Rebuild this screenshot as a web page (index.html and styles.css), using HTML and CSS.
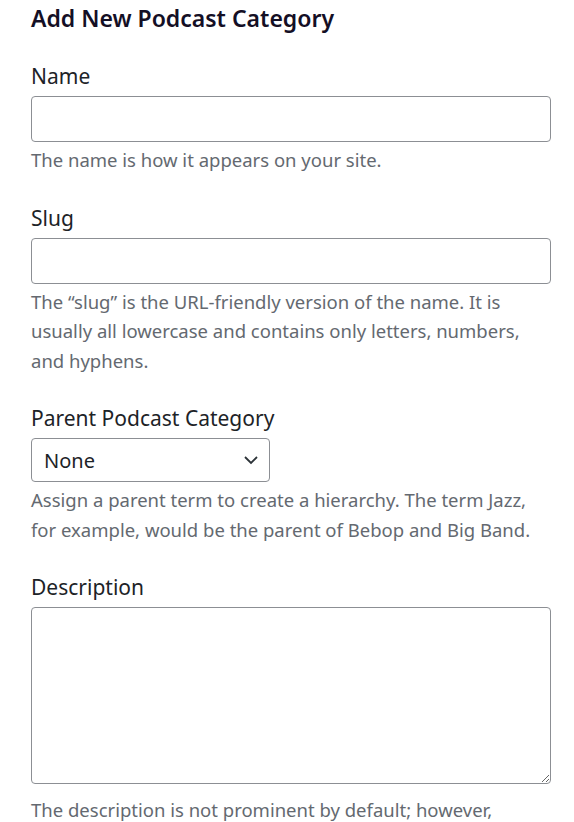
FILE: index.html
```html
<!DOCTYPE html>
<html lang="en">
<head>
<meta charset="utf-8">
<title>Add New Podcast Category</title>
<link rel="stylesheet" href="styles.css">
</head>
<body>
<div class="form-wrap">
  <h2 class="title">Add New Podcast Category</h2>
  <div class="field">
    <label class="label" for="tag-name">Name</label>
    <input class="text-input" id="tag-name" type="text">
    <p class="help">The name is how it appears on your site.</p>
  </div>
  <div class="field">
    <label class="label" for="tag-slug">Slug</label>
    <input class="text-input" id="tag-slug" type="text">
    <p class="help">The “slug” is the URL-friendly version of the name. It is usually all lowercase and contains only letters, numbers, and hyphens.</p>
  </div>
  <div class="field">
    <label class="label" for="parent">Parent Podcast Category</label>
    <div class="select">
      <span class="select-value">None</span>
      <svg class="chevron" width="16" height="16" viewBox="0 0 16 16"><path d="M2 5 L8 11 L14 5" fill="none" stroke="#2c3338" stroke-width="1.8"/></svg>
    </div>
    <p class="help">Assign a parent term to create a hierarchy. The term Jazz, for example, would be the parent of Bebop and Big Band.</p>
  </div>
  <div class="field">
    <label class="label" for="desc">Description</label>
    <textarea class="textarea" id="desc"></textarea>
    <p class="help help-wide">The description is not prominent by default; however, some themes may show it.</p>
  </div>
</div>
</body>
</html>
```
FILE: styles.css
```css
html, body {
  margin: 0;
  padding: 0;
  background: #fff;
}
body {
  font-family: "Noto Sans", "Open Sans", sans-serif;
  color: #1d2327;
  overflow: hidden;
}
.form-wrap {
  margin-left: 31px;
  width: 520px;
  display: flex;
  flex-direction: column;
}
.title {
  margin: 0;
  font-size: 23px;
  font-weight: 600;
  line-height: 36px;
  color: #140f25;
}
.field {
  display: flex;
  flex-direction: column;
  margin-top: 26px;
}
.field + .field {
  margin-top: 29px;
}
.label {
  font-size: 21px;
  line-height: 28px;
  color: #1d2327;
}
.text-input {
  margin-top: 6px;
  box-sizing: border-box;
  width: 520px;
  height: 46px;
  border: 1px solid #8c8f94;
  border-radius: 4px;
  background: #fff;
  font: inherit;
}
.field + .field .text-input {
  margin-top: 6px;
}
.help {
  margin: 3px 0 0;
  font-size: 18.5px;
  line-height: 29.5px;
  color: #646970;
}
.help-wide {
  margin-top: 11px;
  max-width: 500px;
}
.select {
  margin-top: 6px;
  box-sizing: border-box;
  width: 239px;
  height: 44px;
  border: 1px solid #8c8f94;
  border-radius: 4px;
  display: flex;
  align-items: center;
  justify-content: space-between;
  padding: 0 10px 0 12px;
}
.select-value {
  font-size: 20px;
  color: #1d2327;
}
.chevron {
  display: block;
}
.textarea {
  margin-top: 6px;
  box-sizing: border-box;
  width: 520px;
  height: 177px;
  border: 1px solid #8c8f94;
  border-radius: 4px;
  font: inherit;
  resize: vertical;
}
```
